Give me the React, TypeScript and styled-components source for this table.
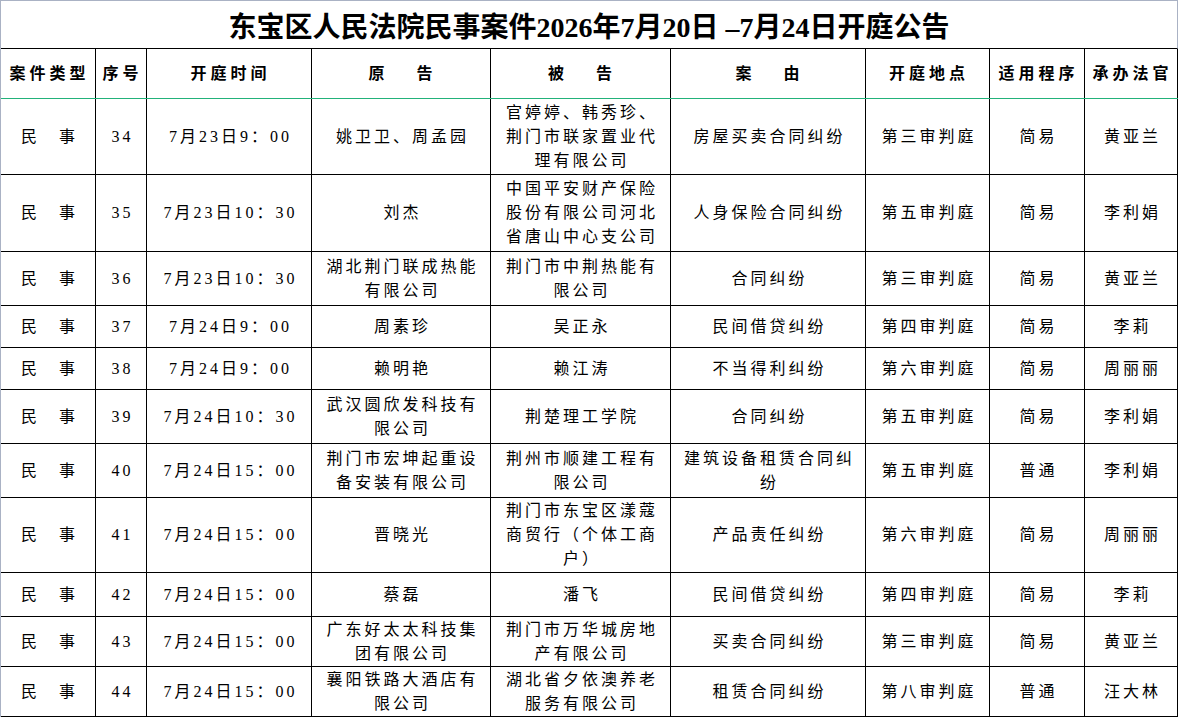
import React from 'react';
import styled, { createGlobalStyle } from 'styled-components';

const GlobalStyle = createGlobalStyle`
  html, body {
    margin: 0;
    padding: 0;
    background: #fff;
  }
  * {
    box-sizing: border-box;
  }
`;

// 각 열의 너비 (오른쪽 테두리 포함)
const COLS = '95px 51px 165px 179px 180px 195px 124px 95px 93px';

const HEADERS = [
  '案件类型',
  '序号',
  '开庭时间',
  '原\u3000 告',
  '被\u3000 告',
  '案\u3000 由',
  '开庭地点',
  '适用程序',
  '承办法官',
];

interface CaseRow {
  no: string;
  time: string;
  plaintiff: string;
  defendant: string;
  cause: string;
  court: string;
  procedure: string;
  judge: string;
  height: number;
}

const ROWS: CaseRow[] = [
  {
    no: '34',
    time: '7月23日9：00',
    plaintiff: '姚卫卫、周孟园',
    defendant: '官婷婷、韩秀珍、\n荆门市联家置业代\n理有限公司',
    cause: '房屋买卖合同纠纷',
    court: '第三审判庭',
    procedure: '简易',
    judge: '黄亚兰',
    height: 76,
  },
  {
    no: '35',
    time: '7月23日10：30',
    plaintiff: '刘杰',
    defendant: '中国平安财产保险\n股份有限公司河北\n省唐山中心支公司',
    cause: '人身保险合同纠纷',
    court: '第五审判庭',
    procedure: '简易',
    judge: '李利娟',
    height: 77,
  },
  {
    no: '36',
    time: '7月23日10：30',
    plaintiff: '湖北荆门联成热能\n有限公司',
    defendant: '荆门市中荆热能有\n限公司',
    cause: '合同纠纷',
    court: '第三审判庭',
    procedure: '简易',
    judge: '黄亚兰',
    height: 54,
  },
  {
    no: '37',
    time: '7月24日9：00',
    plaintiff: '周素珍',
    defendant: '吴正永',
    cause: '民间借贷纠纷',
    court: '第四审判庭',
    procedure: '简易',
    judge: '李莉',
    height: 42,
  },
  {
    no: '38',
    time: '7月24日9：00',
    plaintiff: '赖明艳',
    defendant: '赖江涛',
    cause: '不当得利纠纷',
    court: '第六审判庭',
    procedure: '简易',
    judge: '周丽丽',
    height: 42,
  },
  {
    no: '39',
    time: '7月24日10：30',
    plaintiff: '武汉圆欣发科技有\n限公司',
    defendant: '荆楚理工学院',
    cause: '合同纠纷',
    court: '第五审判庭',
    procedure: '简易',
    judge: '李利娟',
    height: 54,
  },
  {
    no: '40',
    time: '7月24日15：00',
    plaintiff: '荆门市宏坤起重设\n备安装有限公司',
    defendant: '荆州市顺建工程有\n限公司',
    cause: '建筑设备租赁合同纠\n纷',
    court: '第五审判庭',
    procedure: '普通',
    judge: '李利娟',
    height: 54,
  },
  {
    no: '41',
    time: '7月24日15：00',
    plaintiff: '晋晓光',
    defendant: '荆门市东宝区漾蔻\n商贸行（个体工商\n户）',
    cause: '产品责任纠纷',
    court: '第六审判庭',
    procedure: '简易',
    judge: '周丽丽',
    height: 75,
  },
  {
    no: '42',
    time: '7月24日15：00',
    plaintiff: '蔡磊',
    defendant: '潘飞',
    cause: '民间借贷纠纷',
    court: '第四审判庭',
    procedure: '简易',
    judge: '李莉',
    height: 44,
  },
  {
    no: '43',
    time: '7月24日15：00',
    plaintiff: '广东好太太科技集\n团有限公司',
    defendant: '荆门市万华城房地\n产有限公司',
    cause: '买卖合同纠纷',
    court: '第三审判庭',
    procedure: '简易',
    judge: '黄亚兰',
    height: 50,
  },
  {
    no: '44',
    time: '7月24日15：00',
    plaintiff: '襄阳铁路大酒店有\n限公司',
    defendant: '湖北省夕依澳养老\n服务有限公司',
    cause: '租赁合同纠纷',
    court: '第八审判庭',
    procedure: '普通',
    judge: '汪大林',
    height: 50,
  },
];

const App = () => {
  return (
    <>
      <GlobalStyle />
      <Sheet>
        <Title>东宝区人民法院民事案件2026年7月20日 –7月24日开庭公告</Title>
        <HeaderRow>
          {HEADERS.map((h) => (
            <HeadCell key={h}>{h}</HeadCell>
          ))}
        </HeaderRow>
        {ROWS.map((row) => (
          <Row key={row.no} $h={row.height}>
            <Cell>民{'\u3000'}事</Cell>
            <Cell>{row.no}</Cell>
            <Cell>{row.time}</Cell>
            <Cell>{row.plaintiff}</Cell>
            <Cell>{row.defendant}</Cell>
            <Cell>{row.cause}</Cell>
            <Cell>{row.court}</Cell>
            <Cell>{row.procedure}</Cell>
            <Cell>{row.judge}</Cell>
          </Row>
        ))}
      </Sheet>
    </>
  );
};

export default App;

const Sheet = styled.div`
  width: 1178px;
  height: 717px;
  overflow: hidden;
  border-top: 1px solid #aab2c4;
  border-left: 1px solid #aab2c4;
  font-family: 'Liberation Serif', 'Noto Sans CJK SC', serif;
  color: #000;
`;

const Title = styled.div`
  height: 48px;
  display: flex;
  align-items: center;
  justify-content: center;
  border-right: 1px solid #aab2c4;
  border-bottom: 1px solid #000;
  font-size: 28px;
  font-weight: bold;
  white-space: pre;
`;

const HeaderRow = styled.div`
  display: grid;
  grid-template-columns: ${COLS};
  height: 50px;
  border-bottom: 1px solid #22b27a;
`;

const Row = styled.div<{ $h: number }>`
  display: grid;
  grid-template-columns: ${COLS};
  height: ${(p) => p.$h}px;
  border-bottom: 1px solid #000;
`;

const Cell = styled.div`
  display: flex;
  align-items: center;
  justify-content: center;
  text-align: center;
  border-right: 1px solid #000;
  padding: 0 0 0 3px;
  font-size: 16px;
  line-height: 24px;
  letter-spacing: 3px;
  white-space: pre-line;
  overflow: hidden;
`;

const HeadCell = styled(Cell)`
  font-weight: bold;
  letter-spacing: 4px;
  white-space: pre;
`;
